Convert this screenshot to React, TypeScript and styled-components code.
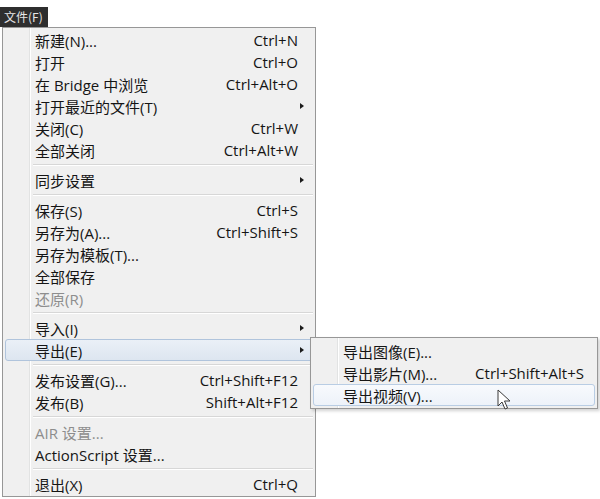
import React from "react";
import styled, { createGlobalStyle, css } from "styled-components";

const Global = createGlobalStyle`
  html, body { margin: 0; padding: 0; background: #ffffff; }
  body { font-family: "Open Sans", "Noto Sans CJK SC", sans-serif; }
`;

const Page = styled.div`
  position: relative;
  width: 600px;
  height: 499px;
  overflow: hidden;
  padding-top: 7px;
  box-sizing: border-box;
`;

const MenuTitle = styled.div`
  width: 48px;
  height: 20px;
  background: #2e2e2e;
  color: #e6e6e6;
  font-size: 12px;
  line-height: 20px;
  padding-left: 4px;
  box-sizing: border-box;
  font-family: "Noto Sans CJK SC", sans-serif;
`;

const Panel = styled.div<{ $width: number }>`
  display: flex;
  flex-direction: column;
  margin-left: 2px;
  width: ${(p) => p.$width}px;
  box-sizing: border-box;
  border: 1px solid #979797;
  background:
    linear-gradient(to right, transparent 26px, #e2e3e3 26px, #e2e3e3 27px, #ffffff 27px, #ffffff 28px, transparent 28px),
    #f0f0f0;
  padding: 1px 2px 1px 2px;
  font-size: 15px;
  color: #151515;
`;

const SubPanel = styled(Panel)`
  position: absolute;
  left: 310px;
  top: 337px;
  margin-left: 0;
  padding: 2px;
  box-shadow: 2px 2px 3px rgba(0, 0, 0, 0.18);
`;

const Row = styled.div<{ $active?: boolean; $disabled?: boolean; $sub?: boolean }>`
  display: flex;
  align-items: center;
  height: 22px;
  box-sizing: border-box;
  padding: 0 ${(p) => (p.$sub ? 10 : 14)}px 0 29px;
  border: 1px solid transparent;
  border-radius: 3px;
  color: ${(p) => (p.$disabled ? "#8d8d8d" : "#151515")};
  ${(p) =>
    p.$active &&
    (p.$sub
      ? css`
          background: linear-gradient(to bottom, #f8fafd, #edf2f9);
          border-color: #b9cde4;
        `
      : css`
          background: linear-gradient(to bottom, #eaf0f7, #dde6f0);
          border-color: #b0c4dc;
        `)}
`;

const Label = styled.span`
  flex: 1;
  white-space: nowrap;
`;

const Shortcut = styled.span`
  white-space: nowrap;
`;

const Arrow = styled.span`
  width: 0;
  height: 0;
  margin-right: -6px;
  border-top: 3.5px solid transparent;
  border-bottom: 3.5px solid transparent;
  border-left: 4px solid #1b1b1b;
`;

const Separator = styled.div`
  height: 1px;
  margin: 3px 0 3px 28px;
  background: #d7d7d7;
  border-bottom: 1px solid #ffffff;
`;

const Cursor = styled.svg`
  position: absolute;
  left: 497px;
  top: 389px;
`;

type Item =
  | { sep: true }
  | { label: string; shortcut?: string; sub?: boolean; disabled?: boolean; active?: boolean };

const mainItems: Item[] = [
  { label: "新建(N)...", shortcut: "Ctrl+N" },
  { label: "打开", shortcut: "Ctrl+O" },
  { label: "在 Bridge 中浏览", shortcut: "Ctrl+Alt+O" },
  { label: "打开最近的文件(T)", sub: true },
  { label: "关闭(C)", shortcut: "Ctrl+W" },
  { label: "全部关闭", shortcut: "Ctrl+Alt+W" },
  { sep: true },
  { label: "同步设置", sub: true },
  { sep: true },
  { label: "保存(S)", shortcut: "Ctrl+S" },
  { label: "另存为(A)...", shortcut: "Ctrl+Shift+S" },
  { label: "另存为模板(T)..." },
  { label: "全部保存" },
  { label: "还原(R)", disabled: true },
  { sep: true },
  { label: "导入(I)", sub: true },
  { label: "导出(E)", sub: true, active: true },
  { sep: true },
  { label: "发布设置(G)...", shortcut: "Ctrl+Shift+F12" },
  { label: "发布(B)", shortcut: "Shift+Alt+F12" },
  { sep: true },
  { label: "AIR 设置...", disabled: true },
  { label: "ActionScript 设置..." },
  { sep: true },
  { label: "退出(X)", shortcut: "Ctrl+Q" },
];

const subItems: Item[] = [
  { label: "导出图像(E)..." },
  { label: "导出影片(M)...", shortcut: "Ctrl+Shift+Alt+S" },
  { label: "导出视频(V)...", active: true },
];

function renderItems(items: Item[], isSub = false) {
  return items.map((it, i) =>
    "sep" in it ? (
      <Separator key={i} />
    ) : (
      <Row key={i} $active={it.active} $disabled={it.disabled} $sub={isSub}>
        <Label>{it.label}</Label>
        {it.shortcut && <Shortcut>{it.shortcut}</Shortcut>}
        {it.sub && <Arrow />}
      </Row>
    )
  );
}

export default function App() {
  return (
    <Page>
      <Global />
      <MenuTitle>文件(F)</MenuTitle>
      <Panel $width={314}>{renderItems(mainItems)}</Panel>
      <SubPanel $width={288}>{renderItems(subItems, true)}</SubPanel>
      <Cursor width="16" height="22" viewBox="0 0 16 22">
        <path
          d="M1 1 L1 17 L5 13 L8 20 L10.5 19 L7.5 12 L13 12 Z"
          fill="#ffffff"
          stroke="#3a3a3a"
          strokeWidth="1"
          strokeLinejoin="round"
        />
      </Cursor>
    </Page>
  );
}
